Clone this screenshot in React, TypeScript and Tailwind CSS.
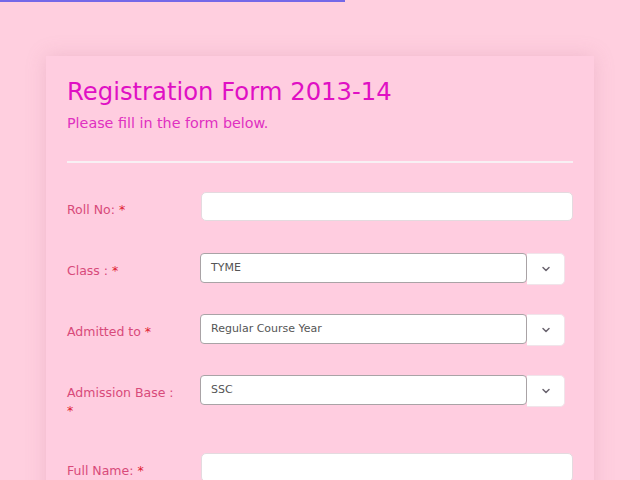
import React from 'react';
import { ChevronDown } from 'lucide-react';

type Row = {
  label: string;
  kind: 'text' | 'select';
  value?: string;
  wrap?: boolean;
};

const rows: Row[] = [
  { label: 'Roll No:', kind: 'text' },
  { label: 'Class :', kind: 'select', value: 'TYME' },
  { label: 'Admitted to', kind: 'select', value: 'Regular Course Year' },
  { label: 'Admission Base :', kind: 'select', value: 'SSC', wrap: true },
  { label: 'Full Name:', kind: 'text' },
];

function Field({ row }: { row: Row }) {
  if (row.kind === 'text') {
    return (
      <div className="h-[29px] w-[372px] ml-px rounded-[5px] border border-[#e4dadf] bg-white" />
    );
  }
  return (
    <div className="flex w-[365px]">
      <div className="h-[30px] flex-1 rounded-[4px] border border-[#a9a3a6] bg-white px-[10px] pt-[6px] text-[11px] text-[#555]">
        {row.value}
      </div>
      <div className="flex h-[32px] w-[38px] items-center justify-center rounded-r-[5px] border border-l-0 border-[#f0e4ea] bg-white">
        <ChevronDown className="h-[12px] w-[12px] text-[#6b6570]" strokeWidth={3} />
      </div>
    </div>
  );
}

export default function App() {
  return (
    <div
      className="relative min-h-[480px] bg-[#ffcfdf] pt-[56px]"
      style={{ fontFamily: '"DejaVu Sans", sans-serif' }}
    >
      <div className="absolute left-0 top-0 h-[2px] w-[345px] bg-[#7468e8]" />
      <div className="mx-[46px] bg-[#ffcde0] px-[21px] pt-[19px] pb-10 shadow-[0_0_18px_rgba(190,120,150,0.25)]">
        <h1 className="text-[24.3px] leading-[34px] text-[#e010c4]">Registration Form 2013-14</h1>
        <p className="mt-[4px] text-[14.3px] leading-[20px] text-[#e030c0]">Please fill in the form below.</p>
        <div className="mt-[28px] h-[2px] bg-[#f8f0f4]" />
        <div className="mt-[29px] flex flex-col">
          {rows.map((row) => (
            <div
              key={row.label}
              className={row.wrap ? 'flex min-h-[78px] items-start' : 'flex min-h-[61px] items-start'}
            >
              <label className="w-[120px] pt-[9px] text-[12.5px] leading-[18px] text-[#d84a7a]">
                {row.label}
                {row.wrap ? <br /> : ' '}
                <span className="text-[#e02030]">*</span>
              </label>
              <div className="ml-[13px]">
                <Field row={row} />
              </div>
            </div>
          ))}
        </div>
      </div>
    </div>
  );
}
